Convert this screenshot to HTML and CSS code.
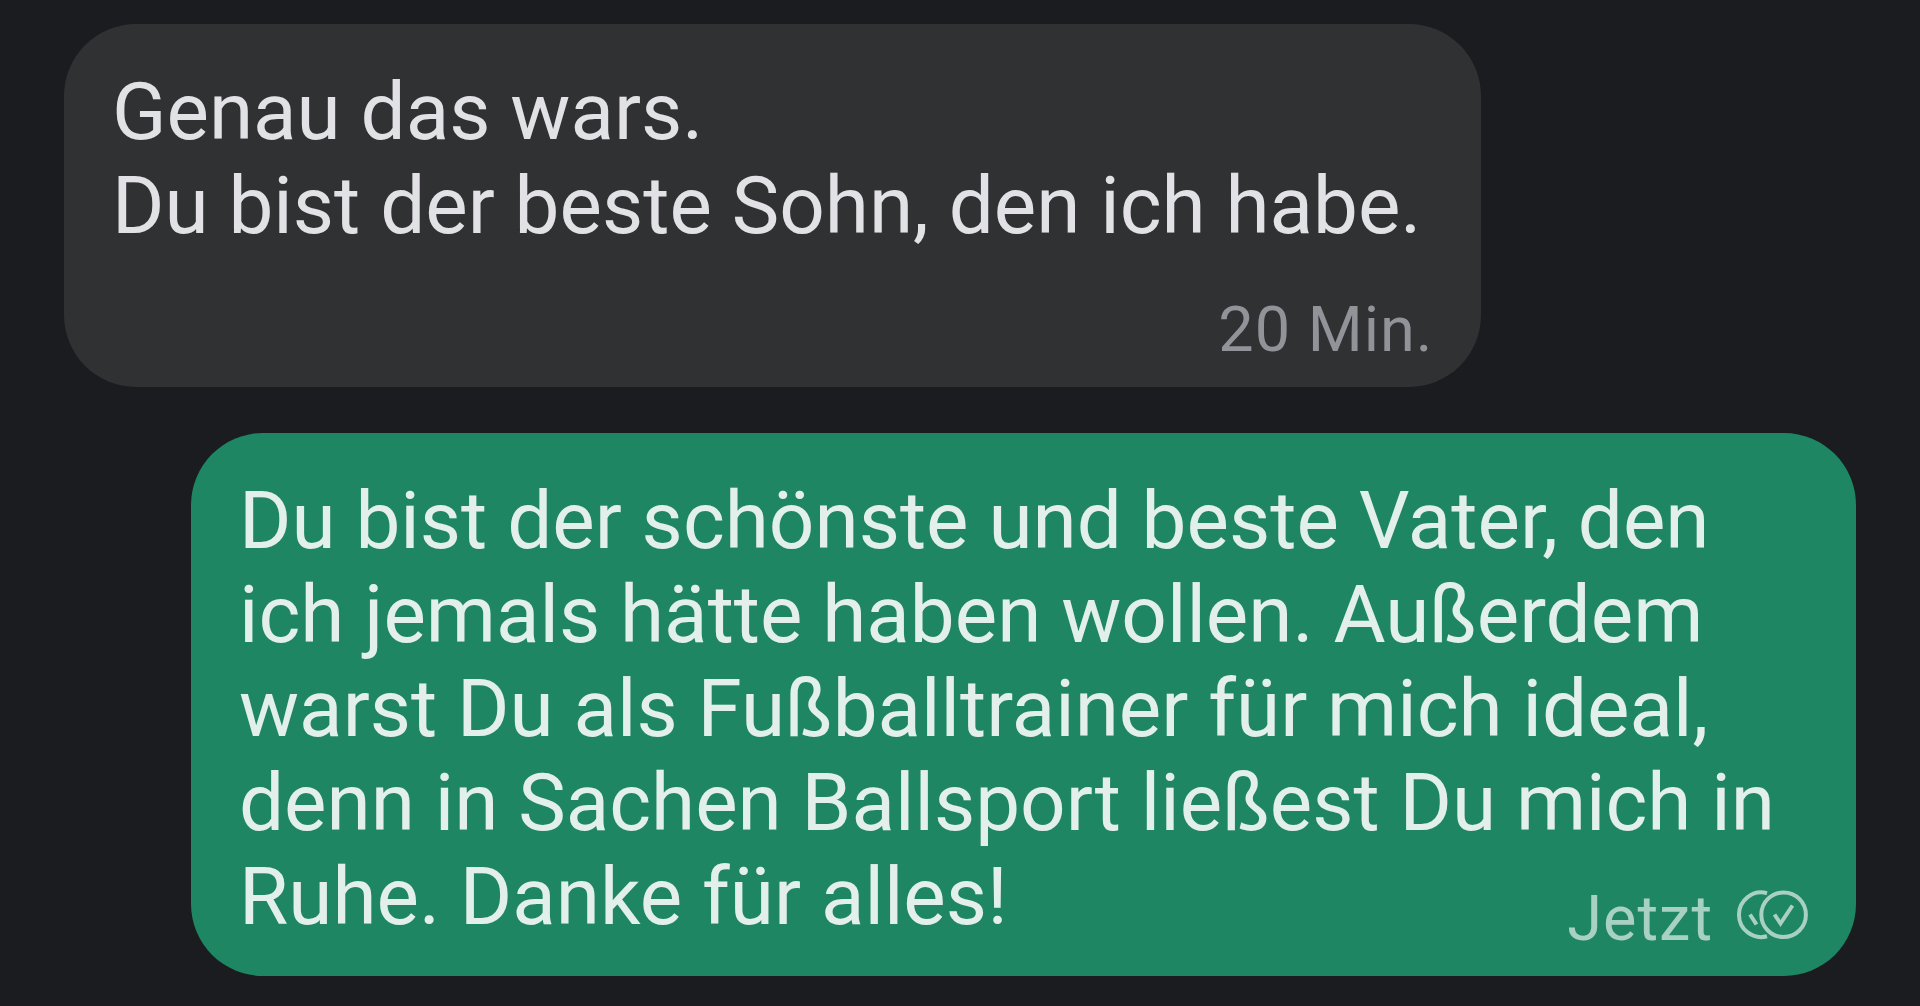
FILE: index.html
```html
<!DOCTYPE html>
<html lang="de">
<head>
    <meta charset="UTF-8">
    <meta name="viewport" content="width=device-width, initial-scale=1.0">
    <title>Chat</title>
    <link rel="stylesheet" href="styles.css">
</head>
<body>
    <main class="chat">
        <article class="message incoming">
            <p class="text">Genau das wars.<br>Du bist der beste Sohn, den ich habe.</p>
            <div class="meta">
                <time>20 Min.</time>
            </div>
        </article>

        <article class="message outgoing">
            <div class="text">
                Du bist der schönste und beste Vater, den ich jemals hätte haben wollen. Außerdem warst Du als Fußballtrainer für mich ideal, denn in Sachen Ballsport ließest Du mich in Ruhe. Danke für alles!
                <div class="meta">
                    <time>Jetzt</time>
                    <svg class="status" viewBox="0 0 72 50" role="img" aria-label="Zugestellt">
                        <path d="M31 3.2 A22.3 22.3 0 1 0 31 46.3"/>
                        <path d="M14 24.5 L20.5 34.5"/>
                        <circle cx="47.6" cy="24.7" r="22.3"/>
                        <path d="M38.5 24.5 L44.5 33.5 L56.5 15.5"/>
                    </svg>
                </div>
            </div>
        </article>
    </main>
</body>
</html>
```
FILE: styles.css
```css
* {
    box-sizing: border-box;
}
body {
    margin: 0;
    background: #1b1c1f;
    font-family: Roboto, sans-serif;
}
.chat {
    display: flex;
    flex-direction: column;
    gap: 46px;
    padding: 24px 64px 30px;
}
.message {
    border-radius: 72px;
    padding: 41px 48px 19px;
}
.text {
    margin: 0;
    font-size: 80px;
    line-height: 94px;
}
.meta {
    display: flex;
    justify-content: flex-end;
    align-items: baseline;
    gap: 23px;
    font-size: 63px;
    line-height: 76px;
    letter-spacing: 1px;
}
.incoming {
    align-self: flex-start;
    background: #303133;
    color: #e2e1e6;
}
.incoming .text {
    padding-right: 12px;
}
.incoming .meta {
    margin-top: 39px;
    color: #929299;
}
.outgoing {
    align-self: flex-end;
    margin-left: 127px;
    background: #1e8662;
    color: #e2efea;
}
.outgoing .text {
    display: flow-root;
}
/* time and status sit beside the last line of the text */
.outgoing .meta {
    float: right;
    margin-top: 31px;
    color: #a9d1c3;
}
.status {
    width: 72px;
    height: 50px;
    fill: none;
    stroke: currentColor;
    stroke-width: 4;
}
```
